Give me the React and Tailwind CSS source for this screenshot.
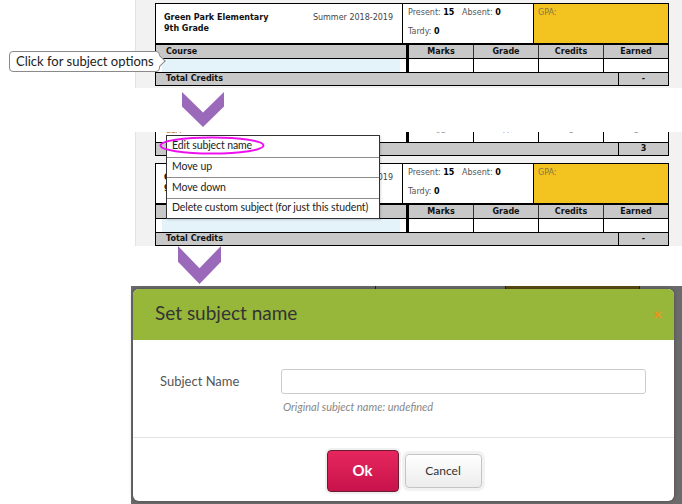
import React from 'react';

const Chevron = ({ w, h }) => (
  <svg width={w} height={h} viewBox="0 0 42 36" preserveAspectRatio="none">
    <polygon points="0,0 0,15 21,36 42,15 42,0 21,21" fill="#9a69b9" />
  </svg>
);

const ReportCard = ({ total }) => {
  return (
    <div className="w-[514px] border border-black bg-white text-[8px] leading-none text-[#111] font-['DejaVu_Sans',Verdana,sans-serif]">
      {/* school / attendance / gpa */}
      <div className="flex h-[39px]">
        <div className="w-[247px] border-r border-black flex flex-col justify-center pl-[8px] pr-[9px]">
          <div className="flex justify-between">
            <span className="font-bold">Green Park Elementary</span>
            <span className="text-[#444]">Summer 2018-2019</span>
          </div>
          <div className="font-bold mt-[3px]">9th Grade</div>
        </div>
        <div className="w-[131px] border-r border-black pl-[5px] pt-[5px] text-[#555]">
          <div>
            Present: <b className="text-black">15</b>&nbsp;&nbsp; Absent: <b className="text-black">0</b>
          </div>
          <div className="mt-[11px]">
            Tardy: <b className="text-black">0</b>
          </div>
        </div>
        <div className="flex-1 bg-[#f3c320] pl-[4px] pt-[5px] text-[#8a7440]">GPA:</div>
      </div>

      {/* column headers */}
      <div className="flex h-[15px] border-t-2 border-black bg-[#c8c8c8] font-bold">
        <div className="w-[253px] border-r-[3px] border-black pl-[10px] flex items-center">Course</div>
        <div className="w-[65px] border-r border-[#333] flex items-center justify-center">Marks</div>
        <div className="w-[65px] border-r border-[#333] flex items-center justify-center">Grade</div>
        <div className="w-[65px] border-r border-[#333] flex items-center justify-center">Credits</div>
        <div className="flex-1 flex items-center justify-center">Earned</div>
      </div>

      {/* empty course row */}
      <div className="flex h-[14px] border-t border-black">
        <div className="w-[253px] border-r-[3px] border-black pl-[6px] pr-[6px]">
          <div className="h-full bg-[#e4f2fa]" />
        </div>
        <div className="w-[65px] border-r border-black" />
        <div className="w-[65px] border-r border-black" />
        <div className="w-[65px] border-r border-black" />
        <div className="flex-1" />
      </div>

      {/* total */}
      <div className="flex h-[13px] border-t border-black bg-[#c8c8c8] font-bold">
        <div className="flex-1 pl-[10px] flex items-center">Total Credits</div>
        <div className="w-[50px] border-l border-black flex items-center justify-center">{total}</div>
      </div>
    </div>
  );
};

const menuItems = ['Edit subject name', 'Move up', 'Move down', 'Delete custom subject (for just this student)'];

export default function App() {
  return (
    <div className="relative w-[682px] h-[504px] overflow-hidden bg-white">
      {/* step 1 */}
      <div className="ml-[135px] h-[88px] bg-[#f2f2f2] border-l border-[#e2e2e2] pl-[19px] pt-[3px]">
        <ReportCard total="-" />
      </div>

      {/* tooltip */}
      <div className="absolute left-[9px] top-[51px] w-[151px] h-[21px] rounded-[4px] border-[1.5px] border-[#8a8a8a] bg-white pl-[6px] flex items-center text-[13px] text-[#222] font-['Lato',sans-serif] whitespace-nowrap">
        Click for subject options
        <div className="absolute right-[-5px] top-[5px] w-[8px] h-[8px] rotate-45 bg-white border-t-[1.5px] border-r-[1.5px] border-[#8a8a8a]" />
      </div>

      <div className="h-[44px] pl-[182px] pt-[4px]">
        <Chevron w={42} h={35} />
      </div>

      {/* step 2 */}
      <div className="relative ml-[135px] h-[114px] bg-[#f2f2f2] border-l border-[#e2e2e2] pl-[19px]">
        <div className="w-[514px] text-[8px] leading-none font-['DejaVu_Sans',Verdana,sans-serif]">
          <div className="flex h-[10px] border-x border-black bg-white overflow-hidden text-[#999]">
            <div className="w-[253px] border-r-[3px] border-black pl-[10px] text-[#c07a30]">
              <div className="-mt-[5px]">ELA</div>
            </div>
            <div className="w-[65px] border-r border-black text-center"><div className="-mt-[5px]">93</div></div>
            <div className="w-[65px] border-r border-black text-center"><div className="-mt-[5px]">A</div></div>
            <div className="w-[65px] border-r border-black text-center"><div className="-mt-[5px]">1</div></div>
            <div className="flex-1 text-center"><div className="-mt-[5px]">1</div></div>
          </div>
          <div className="flex h-[14px] border border-black bg-[#c8c8c8] font-bold text-[#111]">
            <div className="flex-1 pl-[10px] flex items-center">Total Credits</div>
            <div className="w-[50px] border-l border-black flex items-center justify-center">3</div>
          </div>
        </div>
        <div className="mt-[7px]">
          <ReportCard total="-" />
        </div>

        {/* context menu */}
        <div className="absolute left-[30px] top-[3px] w-[214px] bg-white border border-[#333] shadow-[1px_1px_2px_rgba(0,0,0,0.15)] font-['Lato',sans-serif] text-[10.5px] text-[#222]">
          {menuItems.map((item, i) => (
            <div
              key={item}
              className={'h-[20.5px] flex items-center pl-[5px] whitespace-nowrap tracking-[-0.1px] ' + (i > 0 ? 'border-t border-[#8c8c8c]' : '')}
            >
              {item}
            </div>
          ))}
        </div>

        {/* highlight ring */}
        <svg className="absolute left-[23px] top-[4px]" width="106" height="19" viewBox="0 0 106 19">
          <ellipse cx="53" cy="9.5" rx="51.5" ry="8" fill="none" stroke="#ee11ee" strokeWidth="2" />
        </svg>
      </div>

      <div className="h-[40px] pl-[178px]">
        <Chevron w={43} h={38} />
      </div>

      {/* step 3: dialog over dimmed page */}
      <div className="ml-[131px] h-[218px] bg-[#6b6b6b] flex flex-col">
        <div className="h-[3px] flex shrink-0">
          <div className="w-[244px]" />
          <div className="w-[130px] border-l border-[#222]" />
          <div className="w-[135px] bg-[#5b4a14] border-x border-[#222]" />
        </div>
        <div className="ml-[2px] w-[541px] h-[212px] bg-white rounded-[6px] overflow-hidden shadow-[0_0_4px_rgba(0,0,0,0.3)] font-['Lato',sans-serif] flex flex-col">
          <div className="h-[51px] bg-[#97b73b] flex items-center justify-between pl-[22px] pr-[12px] shrink-0">
            <span className="text-[19px] text-[#333] -mt-[3px]">Set subject name</span>
            <span className="text-[15px] font-bold text-[#f39019] leading-none">×</span>
          </div>
          <div className="h-[98px] border-b border-[#e3e3e3] flex pl-[27px] pr-[28px] pt-[29px] shrink-0">
            <div className="w-[121px] text-[13px] text-[#555] mt-[3px]">Subject Name</div>
            <div className="flex-1">
              <div className="h-[25px] border border-[#cccccc] rounded-[3px] bg-white" />
              <div className="mt-[5px] ml-[2px] text-[11px] italic text-[#888]">Original subject name: undefined</div>
            </div>
          </div>
          <div className="flex-1 flex items-center justify-center gap-[6px] pt-[2px] pl-[1px]">
            <button className="w-[72px] h-[42px] rounded-[4px] border border-[#6b1b33] bg-gradient-to-b from-[#e6265e] to-[#c8124b] text-white font-bold text-[15px] shadow-[0_0_0_2px_#f0f0f0]">
              Ok
            </button>
            <button className="w-[77px] h-[34px] rounded-[4px] border border-[#c4c4c4] bg-gradient-to-b from-white to-[#ececec] text-[#333] text-[12px] shadow-[0_0_0_3px_#f2f2f2]">
              Cancel
            </button>
          </div>
        </div>
      </div>
    </div>
  );
}
